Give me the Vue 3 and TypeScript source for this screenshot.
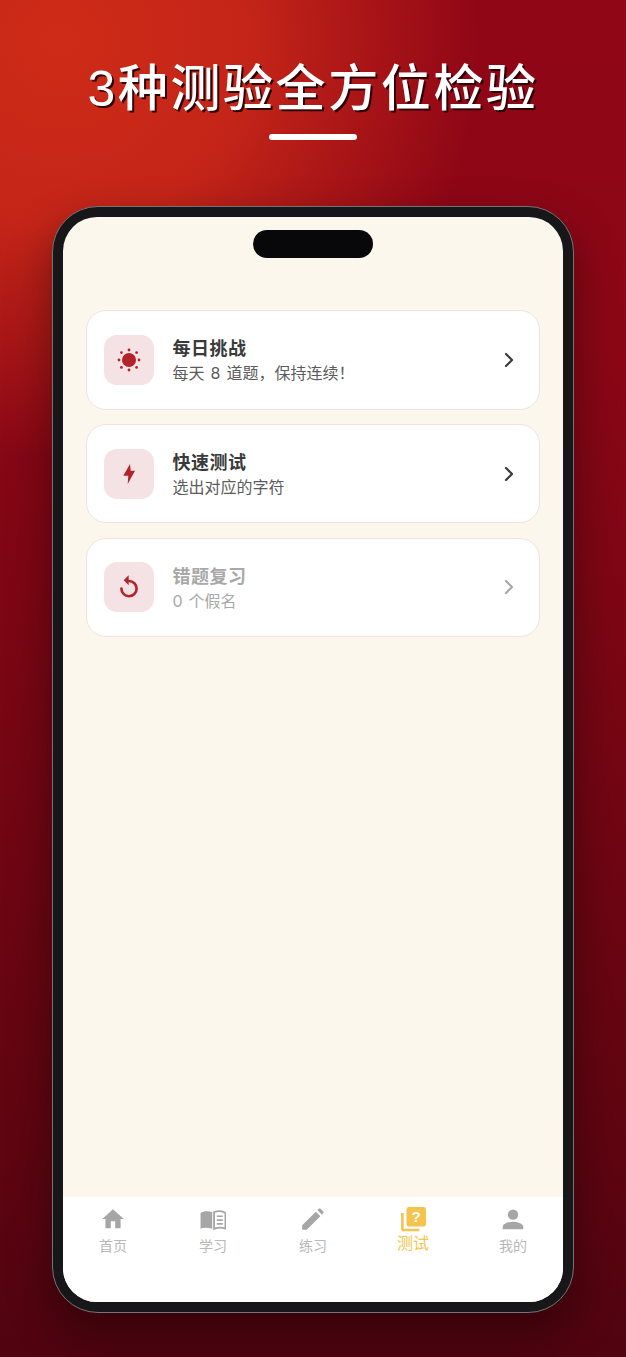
<script setup lang="ts">
interface Item { title: string; sub: string; icon: string; dim?: boolean }
const items: Item[] = [
  { title: '每日挑战', sub: '每天 8 道题，保持连续！', icon: 'sun' },
  { title: '快速测试', sub: '选出对应的字符', icon: 'bolt' },
  { title: '错题复习', sub: '0 个假名', icon: 'redo', dim: true },
]
const tabs = [
  { label: '首页', icon: 'home' },
  { label: '学习', icon: 'book' },
  { label: '练习', icon: 'pen' },
  { label: '测试', icon: 'quiz', active: true },
  { label: '我的', icon: 'user' },
]
</script>

<template>
  <div class="page">
    <header class="head">
      <h1 class="title">3种测验全方位检验</h1>
      <div class="rule"></div>
    </header>
    <div class="phone">
      <div class="screen">
        <div class="island"></div>
        <main class="list">
          <div v-for="it in items" :key="it.title" class="card" :class="{ dim: it.dim }">
            <div class="ico">
              <svg v-if="it.icon === 'sun'" viewBox="0 0 30 30" width="30" height="30">
                <circle cx="15" cy="15" r="7" fill="#b3242a" />
                <g fill="#b3242a">
                  <circle cx="15" cy="5" r="1.4" /><circle cx="15" cy="25" r="1.4" />
                  <circle cx="5" cy="15" r="1.4" /><circle cx="25" cy="15" r="1.4" />
                  <circle cx="7.4" cy="7.6" r="1.4" /><circle cx="22.6" cy="7.6" r="1.4" />
                  <circle cx="7.4" cy="22.4" r="1.4" /><circle cx="22.6" cy="22.4" r="1.4" />
                </g>
              </svg>
              <svg v-else-if="it.icon === 'bolt'" viewBox="0 0 30 30" width="30" height="30">
                <path d="M16 5 L9.3 16.7 H14.3 L13.7 25 L21 11.7 H16.7 Z" fill="#b3242a" />
              </svg>
              <svg v-else viewBox="0 0 30 30" width="30" height="30">
                <path d="M7.4 16.5 A7.6 7.6 0 1 0 15 9" fill="none" stroke="#b3242a" stroke-width="2.6" stroke-linecap="round" />
                <path d="M14.7 3.3 V13.3 L9.7 8.3 Z" fill="#b3242a" />
              </svg>
            </div>
            <div class="txt">
              <div class="t">{{ it.title }}</div>
              <div class="s">{{ it.sub }}</div>
            </div>
            <svg class="chev" viewBox="0 0 12 16" width="12" height="16">
              <path d="M3 2 L9 8 L3 14" fill="none" stroke="currentColor" stroke-width="2.2" stroke-linecap="round" stroke-linejoin="round" />
            </svg>
          </div>
        </main>
        <nav class="tabs">
          <div v-for="tb in tabs" :key="tb.label" class="tab" :class="{ on: tb.active }">
            <svg viewBox="0 0 24 24" width="26" height="26" class="tabico">
              <path v-if="tb.icon === 'home'" d="M10 20.5v-6.5h4v6.5h5v-8.5h3L12 3 2 12h3v8.5z" fill="currentColor" />
              <g v-else-if="tb.icon === 'book'">
                <path d="M0.5 6.5C3 4.5 7 4.3 11.3 5.6V21C7 19.8 3 19.8 0.5 21z" fill="currentColor" />
                <path d="M13 5.6C17 4.3 21 4.5 23.5 6.5V21C21 19.8 17 19.8 13 21z" fill="none" stroke="currentColor" stroke-width="1.7" />
                <path d="M15.5 9.5H21M15.5 13H21M15.5 16.5H21" stroke="currentColor" stroke-width="1.5" />
              </g>
              <path v-else-if="tb.icon === 'pen'" d="M2 22v-4.2L14.6 5.2l4.2 4.2L6.2 22zM16 3.8l1.2-1.2c.5-.5 1.3-.5 1.8 0l2.4 2.4c.5.5.5 1.3 0 1.8L20.2 8z" fill="currentColor" />
              <g v-else-if="tb.icon === 'quiz'">
                <path d="M1 6.5h2.4v14.4h14.4v2.4H3.4A2.4 2.4 0 0 1 1 20.9z" fill="currentColor" />
                <rect x="6" y="1" width="18" height="18" rx="2.2" fill="currentColor" />
                <text x="15" y="15" text-anchor="middle" class="q">?</text>
              </g>
              <g v-else>
                <circle cx="12" cy="8" r="4.8" fill="currentColor" />
                <path d="M2.5 21.5v-2C2.5 16 8.5 14.6 12 14.6S21.5 16 21.5 19.5v2z" fill="currentColor" />
              </g>
            </svg>
            <span class="lbl">{{ tb.label }}</span>
          </div>
        </nav>
      </div>
    </div>
  </div>
</template>

<style>
html, body { margin: 0; padding: 0; }
</style>

<style scoped>
.page {
  width: 626px;
  height: 1357px;
  overflow: hidden;
  box-sizing: border-box;
  padding-top: 54px;
  display: flex;
  flex-direction: column;
  align-items: center;
  font-family: "Inter", "Noto Sans CJK SC", "Liberation Sans", sans-serif;
  background:
    radial-gradient(ellipse 420px 420px at 60px 40px, rgba(210, 46, 24, 0.95) 0%, rgba(205, 42, 24, 0.85) 45%, rgba(205, 42, 24, 0) 100%),
    linear-gradient(180deg, #900616 0%, #8c0716 25%, #760613 55%, #5e0511 85%, #500410 100%);
}
.head {
  display: flex;
  flex-direction: column;
  align-items: center;
}
.title {
  margin: 0;
  padding-top: 4px;
  color: #fff;
  font-size: 50px;
  line-height: 62px;
  font-weight: 500;
  letter-spacing: 2.6px;
  white-space: nowrap;
  text-shadow: 2px 2px 0 rgba(40, 0, 4, 0.95);
  font-family: "Liberation Sans", "Noto Sans CJK SC", sans-serif;
}
.rule {
  width: 88px;
  height: 6px;
  margin-top: 14px;
  border-radius: 3px;
  background: #fff;
}
.phone {
  margin-top: 66px;
  width: 522px;
  height: 1107px;
  box-sizing: border-box;
  padding: 10px;
  border: 1px solid #757378;
  border-radius: 46px;
  background: #17171a;
  box-shadow: 0 20px 40px 4px rgba(10, 0, 4, 0.36);
}
.screen {
  position: relative;
  height: 100%;
  border-radius: 34px;
  overflow: hidden;
  background: #fbf7ec;
  display: flex;
  flex-direction: column;
}
.island {
  position: absolute;
  top: 13px;
  left: 190px;
  width: 120px;
  height: 28px;
  border-radius: 14px;
  background: #08080b;
}
.list {
  flex: 1;
  padding: 93px 23px 0;
  display: flex;
  flex-direction: column;
  gap: 14.2px;
}
.card {
  height: 99.6px;
  box-sizing: border-box;
  display: flex;
  align-items: center;
  padding: 0 24px 0 17px;
  background: #fff;
  border: 1px solid #f4e1df;
  border-radius: 20px;
}
.ico {
  width: 50px;
  height: 50px;
  border-radius: 13px;
  background: #f5e2e4;
  display: flex;
  align-items: center;
  justify-content: center;
  flex: none;
}
.txt {
  margin-left: 18.5px;
  flex: 1;
  margin-top: 2px;
}
.t {
  font-size: 18px;
  line-height: 25px;
  font-weight: 700;
  color: #3a3a3a;
  letter-spacing: 0.5px;
}
.s {
  font-size: 16px;
  line-height: 24px;
  color: #5c5c5c;
  word-spacing: 1.5px;
}
.chev { color: #3a3a3a; }
.dim .t, .dim .s { color: #a8a8a8; }
.dim .chev { color: #a8a8a8; }
.tabs {
  height: 105px;
  flex: none;
  background: #fff;
  display: grid;
  grid-template-columns: repeat(5, 1fr);
  padding-top: 9px;
  box-sizing: border-box;
}
.tab {
  display: flex;
  flex-direction: column;
  align-items: center;
  color: #a6a6a6;
}
.tabico { display: block; }
.lbl {
  margin-top: 4px;
  font-size: 14px;
  line-height: 20px;
  color: #b8b8b8;
}
.tab.on { color: #f4c44e; }
.tab.on .lbl {
  color: #f4c44e;
  font-size: 16px;
  line-height: 20px;
  margin-top: 1px;
}
.q {
  font-family: "Liberation Sans", sans-serif;
  font-size: 14px;
  font-weight: 700;
  fill: #fff;
}
</style>
